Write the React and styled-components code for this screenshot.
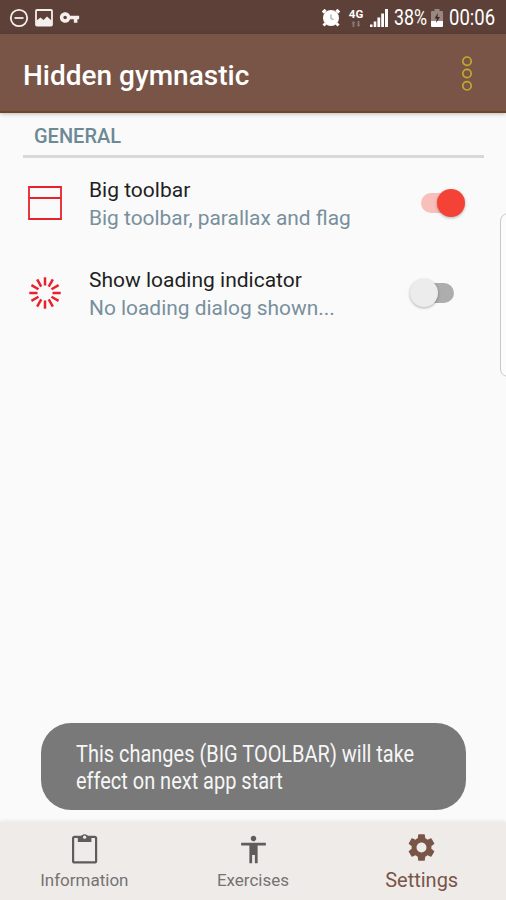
import React, { useState } from 'react';
import styled, { createGlobalStyle } from 'styled-components';
import { MdAccessibility, MdSettings, MdVpnKey } from 'react-icons/md';

function SettingsPage() {
    const [bigToolbar, setBigToolbar] = useState(true);
    const [loading, setLoading] = useState(false);

    return (
        <Screen>
            <GlobalStyle />
            <StatusBar>
                <StatusLeft>
                    <DndIcon />
                    <PictureIcon />
                    <MdVpnKey size={21} />
                </StatusLeft>
                <StatusRight>
                    <AlarmIcon />
                    <NetworkIcon />
                    <SignalIcon />
                    <StatusText $width={31} $scale={0.83}>38%</StatusText>
                    <BatteryIcon />
                    <StatusText $width={46} $scale={0.86}>00:06</StatusText>
                </StatusRight>
            </StatusBar>

            <AppBar>
                <Title>Hidden gymnastic</Title>
                <MenuIcon />
            </AppBar>

            <Content>
                <SectionTitle>GENERAL</SectionTitle>
                <Preference>
                    <IconSlot><ToolbarIcon /></IconSlot>
                    <Texts>
                        <PrefName>Big toolbar</PrefName>
                        <PrefSummary>Big toolbar, parallax and flag</PrefSummary>
                    </Texts>
                    <Switch $on={bigToolbar} onClick={() => setBigToolbar(!bigToolbar)}>
                        <Thumb $on={bigToolbar} />
                    </Switch>
                </Preference>
                <Preference>
                    <IconSlot><LoadingIcon /></IconSlot>
                    <Texts>
                        <PrefName>Show loading indicator</PrefName>
                        <PrefSummary>No loading dialog shown...</PrefSummary>
                    </Texts>
                    <Switch $on={loading} onClick={() => setLoading(!loading)}>
                        <Thumb $on={loading} />
                    </Switch>
                </Preference>
            </Content>

            <EdgeHandle />
            <Toast>
                <ToastText>This changes (BIG TOOLBAR) will take<br />effect on next app start</ToastText>
            </Toast>

            <BottomNav>
                <NavItem>
                    <ClipboardIcon />
                    <NavLabel>Information</NavLabel>
                </NavItem>
                <NavItem>
                    <MdAccessibility size={33} />
                    <NavLabel>Exercises</NavLabel>
                </NavItem>
                <NavItem $active>
                    <MdSettings size={33} />
                    <NavLabel $active>Settings</NavLabel>
                </NavItem>
            </BottomNav>
        </Screen>
    )
}

/* status bar icons */
const DndIcon = () => (
    <svg width="20" height="20" viewBox="0 0 20 20" fill="none" stroke="currentColor" strokeWidth="1.8">
        <circle cx="10" cy="10" r="8.2" />
        <path d="M5.5 10h9" />
    </svg>
)

const PictureIcon = () => (
    <svg width="18" height="18" viewBox="0 0 18 18">
        <rect x="1" y="1" width="16" height="15.5" rx="1" fill="none" stroke="currentColor" strokeWidth="1.8" />
        <path d="M1.5 16.5V11.5l4-3 3 2.5 3.5-3.5 4.500 4v5z" fill="currentColor" />
    </svg>
)

const AlarmIcon = () => (
    <svg width="18" height="18" viewBox="0 0 18 18">
        <path d="M.8 3.6 3.6.8M17.2 3.6 14.4.8M3.5 14.5l-2 2M14.5 14.5l2 2" stroke="currentColor" strokeWidth="3" />
        <circle cx="9" cy="9" r="8" fill="currentColor" />
        <path d="M9 5.5v3.8l2.5 1.5" fill="none" stroke="#b5a8a4" strokeWidth="1.3" />
    </svg>
)

const NetworkIcon = () => (
    <Network>
        <NetworkText>4G</NetworkText>
        <svg width="10" height="6" viewBox="0 0 10 6" fill="#8d7a74">
            <path d="M2.5 0 4.5 2.2H3.4V6H1.6V2.2H.5zM7.5 6 9.5 3.8H8.4V0H6.6v3.8H5.5z" />
        </svg>
    </Network>
)

const SignalIcon = () => (
    <svg width="18" height="18" viewBox="0 0 18 18" fill="currentColor">
        <path d="M0 15.5h2.5V18H0zM3.7 12.5h2.6V18H3.7zM7.4 8.5h2.8V18H7.4zM11.2 4.5H14V18h-2.8zM15 0h3v18h-3z" />
    </svg>
)

const BatteryIcon = () => (
    <svg width="12" height="18" viewBox="0 0 12 18">
        <path d="M3.5 0h5v2H11a1 1 0 0 1 1 1v9H0V3a1 1 0 0 1 1-1h2.5z" fill="#9a8781" />
        <path d="M0 12h12v5a1 1 0 0 1-1 1H1a1 1 0 0 1-1-1z" fill="#fff" />
        <path d="M7 4 3.5 9.5h2.3L5 14l4-6H6.5z" fill="#3e2a24" />
    </svg>
)

const MenuIcon = () => (
    <svg width="12" height="36" viewBox="0 0 12 36" fill="none" stroke="#c3a92f" strokeWidth="1.7">
        <circle cx="6" cy="6.2" r="4.2" />
        <circle cx="6" cy="18.5" r="4.2" />
        <circle cx="6" cy="30.8" r="4.2" />
    </svg>
)

const ToolbarIcon = () => (
    <svg width="34" height="34" viewBox="0 0 34 34" fill="none" stroke="#e8222a" strokeWidth="1.8">
        <path d="M1 1h32v32H1zM1 12h32" />
    </svg>
)

const LoadingIcon = () => (
    <svg width="34" height="34" viewBox="-17 -17 34 34" stroke="#e8222a" strokeWidth="2.5">
        {[...Array(12)].map((_, i) => (
            <path key={i} d="M0 -7.5V-15.7" transform={`rotate(${i * 30})`} />
        ))}
    </svg>
)

const ClipboardIcon = () => (
    <svg width="33" height="33" viewBox="0 0 33 33">
        <rect x="5.1" y="3.8" width="23" height="25.6" rx="1.5" fill="none" stroke="currentColor" strokeWidth="2.2" />
        <path d="M9.8 4h3a4 4 0 0 1 7.600 0h3v5H9.8z" fill="currentColor" />
        <circle cx="16.6" cy="4.2" r="1.6" fill="#efebe9" />
    </svg>
)

const GlobalStyle = createGlobalStyle`
    body {
        margin: 0;
        background: #fafafa;
        font-family: Roboto, sans-serif;
    }

    svg {
        display: block;
        flex-shrink: 0;
    }
`

const Screen = styled.div`
    position: relative;
    display: flex;
    flex-direction: column;
    width: 506px;
    height: 900px;
    overflow: hidden;
    background: #fafafa;
`

const StatusBar = styled.div`
    display: flex;
    justify-content: space-between;
    align-items: center;
    height: 34px;
    padding: 1px 11px 0 9px;
    box-sizing: border-box;
    background: #5d4037;
    color: #fff;
`

const StatusLeft = styled.div`
    display: flex;
    align-items: center;
    gap: 6px;
    color: #f5f0ee;
`

const StatusRight = styled.div`
    display: flex;
    align-items: center;
    gap: 6px;
`

const StatusText = styled.span`
    width: ${(p) => p.$width}px;
    font-size: 21.5px;
    line-height: 24px;
    white-space: nowrap;
    transform: scaleX(${(p) => p.$scale});
    transform-origin: left center;
`

const Network = styled.div`
    display: flex;
    flex-direction: column;
    align-items: center;
    gap: 1px;
    width: 16px;
    margin: 0 0 0 2px;
`

const NetworkText = styled.span`
    font-size: 11.5px;
    font-weight: 700;
    line-height: 11px;
`

const AppBar = styled.header`
    display: flex;
    justify-content: space-between;
    align-items: center;
    height: 79px;
    padding: 0 33px 0 23px;
    box-sizing: border-box;
    border-bottom: 2px solid #6d4528;
    background: #795548;
    box-shadow: 0 1px 4px rgba(0, 0, 0, 0.25);
`

const Title = styled.h1`
    margin: 6px 0 0;
    font-size: 28px;
    font-weight: 500;
    line-height: 32px;
    color: #fff;
    white-space: nowrap;
`

const Content = styled.main`
    flex: 1;
    padding: 0 22px 0 23px;
`

const SectionTitle = styled.h2`
    height: 45px;
    margin: 0;
    padding: 11px 0 0 11px;
    box-sizing: border-box;
    border-bottom: 3px solid #d8d8d8;
    font-size: 20px;
    font-weight: 500;
    line-height: 25px;
    color: #6c8995;
`

const Preference = styled.div`
    display: flex;
    align-items: center;
    height: 90px;
`

const IconSlot = styled.div`
    display: flex;
    justify-content: center;
    width: 44px;
    margin-right: 22px;
`

const Texts = styled.div`
    flex: 1;
    padding-top: 1px;
    white-space: nowrap;
`

const PrefName = styled.div`
    font-size: 21px;
    line-height: 28px;
    color: #1f1f1f;
`

const PrefSummary = styled.div`
    font-size: 20.9px;
    line-height: 28px;
    color: #78909c;
`

const Switch = styled.div`
    position: relative;
    width: 43px;
    height: 20px;
    margin-right: ${(p) => (p.$on ? 20 : 30)}px;
    border-radius: 10px;
    background: ${(p) => (p.$on ? '#f8bfbb' : '#adadad')};
`

const Thumb = styled.div`
    position: absolute;
    top: -4px;
    ${(p) => (p.$on ? 'right: -1px;' : 'left: -1px;')}
    width: 28px;
    height: 28px;
    border-radius: 50%;
    background: ${(p) => (p.$on ? '#f44336' : '#ececec')};
    box-shadow: 0 1px 3px rgba(0, 0, 0, 0.3);
`

/* edge panel handle, half off screen */
const EdgeHandle = styled.div`
    position: absolute;
    top: 213px;
    right: -10px;
    width: 16px;
    height: 164px;
    box-sizing: border-box;
    border: 1px solid #c9c9c9;
    border-radius: 8px;
    background: #fcfcfc;
`

const Toast = styled.div`
    position: absolute;
    left: 41px;
    top: 723px;
    width: 425px;
    height: 87px;
    padding: 18px 0 0 35px;
    box-sizing: border-box;
    border-radius: 30px;
    background: #797979;
    color: #f6f6f6;
`

const ToastText = styled.div`
    width: 355px;
    font-size: 23px;
    line-height: 27px;
    white-space: nowrap;
    transform: scaleX(0.868);
    transform-origin: left center;
`

const BottomNav = styled.nav`
    display: flex;
    height: 78px;
    background: #efebe9;
    box-shadow: 0 -1px 4px rgba(0, 0, 0, 0.08);
`

const NavItem = styled.div`
    flex: 1;
    display: flex;
    flex-direction: column;
    align-items: center;
    padding-top: ${(p) => (p.$active ? 9 : 11)}px;
    color: ${(p) => (p.$active ? '#795548' : '#5f5d5c')};
`

const NavLabel = styled.span`
    margin-top: ${(p) => (p.$active ? 4 : 3)}px;
    font-size: ${(p) => (p.$active ? 20 : 17)}px;
    line-height: ${(p) => (p.$active ? 24 : 22)}px;
    color: ${(p) => (p.$active ? '#795548' : '#757372')};
`

export default SettingsPage;
